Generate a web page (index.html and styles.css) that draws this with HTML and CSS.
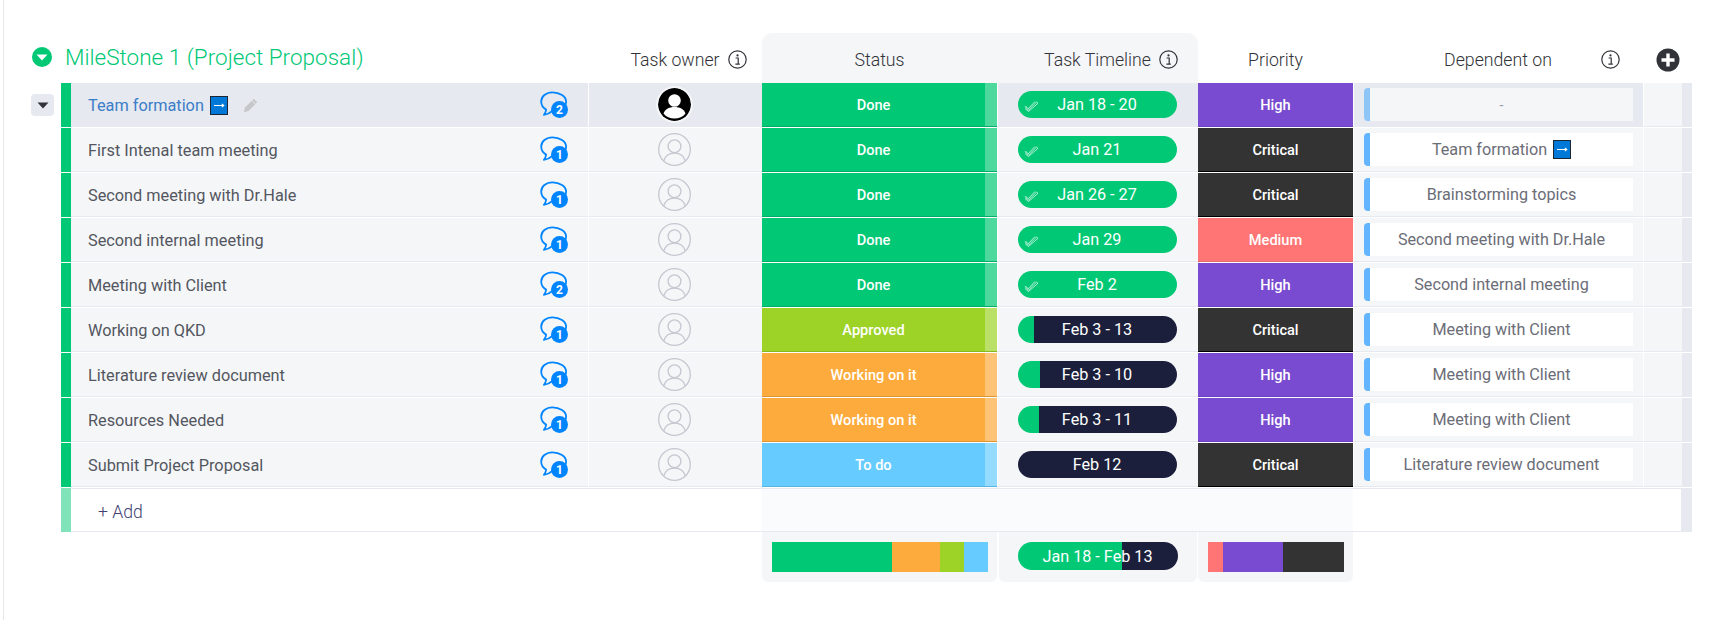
FILE: index.html
```html
<!DOCTYPE html>
<html lang="en">
<head>
<meta charset="utf-8">
<title>MileStone 1</title>
<link rel="stylesheet" href="styles.css">
</head>
<body>
<svg class="defs" width="0" height="0" aria-hidden="true">
  <symbol id="i-info" viewBox="0 0 19 19"><circle cx="9.5" cy="9.5" r="8.7" fill="none" stroke="#323338" stroke-width="1.2"/><circle cx="9.5" cy="5.4" r="1.1" fill="#323338"/><path d="M7.6 8h2.6v6M7.4 14.2h4.4" fill="none" stroke="#323338" stroke-width="1.2"/></symbol>
  <symbol id="i-bubble" viewBox="0 0 28 27"><path d="M12.5 1.3C6 1.3 1.2 5.4 1.2 10.6c0 3.4 1.9 6.3 4.9 8 0 1.9-.8 3.6-2.2 5.2 3.4-.4 6.2-1.6 8.2-3.6 6.6.4 14-3 14-9.6 0-5.2-6.400-9.300-13.600-9.300z" fill="none" stroke="#0085ff" stroke-width="1.800" stroke-linejoin="round"/></symbol>
  <symbol id="i-empty" viewBox="0 0 33 33"><g fill="none" stroke="#c5c7d0" stroke-width="1.300"><circle cx="16.500" cy="16.500" r="15.800"/><circle cx="16.500" cy="13.300" r="6.400"/><path d="M5.600 28c1.600-5 5.800-7.900 10.900-7.900S25.800 23 27.400 28"/></g></symbol>
  <symbol id="i-user" viewBox="0 0 33 33"><circle cx="16.500" cy="16.500" r="16.500" fill="#000"/><circle cx="16.500" cy="12.500" r="6.300" fill="#fff"/><path d="M5.500 25.500c1.500-4.500 6-6.500 11-6.500s9.500 2 11 6.500c-2.500 3.200-6.500 5-11 5s-8.500-1.800-11-5z" fill="#fff"/></symbol>
  <symbol id="i-arrow" viewBox="0 0 18 19"><rect x=".5" y=".5" width="17" height="18" fill="#0078d7" stroke="#1c2733"/><path d="M4 9.500h9.500M11.800 7.800l2 1.700-2 1.700" fill="none" stroke="#fff" stroke-width="1.100"/></symbol>
  <symbol id="i-check" viewBox="0 0 15 12"><path d="M1 6.500l3.500 3.800L12.500 2l1.500 1.300-9.500 8.200L1 8.500M1.500 6l2.700 2.800L11 1.500" fill="none" stroke="#fff" stroke-width=".8" opacity=".85"/></symbol>
</svg>
<main class="board">
  <header class="grid head">
    <div class="group">
      <svg class="group-icon" viewBox="0 0 20 20"><circle cx="10" cy="10" r="10" fill="#00c875"/><path d="M4.500 7.500h11L10 13.500z" fill="#fff"/></svg>
      <h1 class="group-title">MileStone 1 (Project Proposal)</h1>
    </div>
    <div class="hcell">
      <span class="htext">Task owner</span><svg class="info"><use href="#i-info"/></svg>
    </div>
    <div class="hcell hcell-tl">
      <span class="htext">Status</span>
    </div>
    <div class="hcell hcell-tr">
      <span class="htext">Task Timeline</span><svg class="info"><use href="#i-info"/></svg>
    </div>
    <div class="hcell">
      <span class="htext">Priority</span>
    </div>
    <div class="hcell">
      <span class="htext">Dependent on</span><svg class="info info-far"><use href="#i-info"/></svg>
    </div>
    <div class="hadd">
      <svg class="plus" viewBox="0 0 24 24"><circle cx="12" cy="12" r="11.500" fill="#323338"/><path d="M12 5.500v13M5.500 12h13" stroke="#fff" stroke-width="3.400"/></svg>
    </div>
  </header>

  <div class="grid row row-active">
    <div class="gutter"><button class="toggle" aria-label="Collapse"><svg viewBox="0 0 12 7" width="12" height="7"><path d="M.5.500h11L6 6.500z" fill="#323338"/></svg></button></div>
    <div class="bar"></div>
    <div class="name name-active"><span>Team formation</span><svg class="arrow"><use href="#i-arrow"/></svg><svg class="pencil" viewBox="0 0 15 15"><path d="M10.800.800l3.400 3.400-8.800 8.800-4.600 1.200 1.200-4.600z" fill="#c5c7c9"/><path d="M9 2.800l3.400 3.400" stroke="#e6e9ef" stroke-width="1"/></svg><span class="spring"></span><span class="bubble"><svg class="bubble-svg"><use href="#i-bubble"/></svg><b class="badge">2</b></span></div>
    <div class="owner"><svg class="avatar avatar-on"><use href="#i-user"/></svg></div>
    <div class="status done"><span class="label">Done</span><i class="fold"></i></div>
    <div class="time"><span class="pill done-pill"><svg class="check"><use href="#i-check"/></svg>Jan 18 - 20</span></div>
    <div class="prio high">High</div>
    <div class="dep"><span class="dep-box dep-empty"><span class="dep-dash">-</span></span></div>
    <div class="extra"></div><div class="end"></div>
  </div>

  <div class="grid row">
    <div class="gutter"></div><div class="bar"></div>
    <div class="name"><span>First Intenal team meeting</span><span class="spring"></span><span class="bubble"><svg class="bubble-svg"><use href="#i-bubble"/></svg><b class="badge">1</b></span></div>
    <div class="owner"><svg class="avatar"><use href="#i-empty"/></svg></div>
    <div class="status done"><span class="label">Done</span><i class="fold"></i></div>
    <div class="time"><span class="pill done-pill"><svg class="check"><use href="#i-check"/></svg>Jan 21</span></div>
    <div class="prio critical">Critical</div>
    <div class="dep"><span class="dep-box">Team formation<svg class="arrow arrow-dep"><use href="#i-arrow"/></svg></span></div>
    <div class="extra"></div><div class="end"></div>
  </div>

  <div class="grid row">
    <div class="gutter"></div><div class="bar"></div>
    <div class="name"><span>Second meeting with Dr.Hale</span><span class="spring"></span><span class="bubble"><svg class="bubble-svg"><use href="#i-bubble"/></svg><b class="badge">1</b></span></div>
    <div class="owner"><svg class="avatar"><use href="#i-empty"/></svg></div>
    <div class="status done"><span class="label">Done</span><i class="fold"></i></div>
    <div class="time"><span class="pill done-pill"><svg class="check"><use href="#i-check"/></svg>Jan 26 - 27</span></div>
    <div class="prio critical">Critical</div>
    <div class="dep"><span class="dep-box">Brainstorming topics</span></div>
    <div class="extra"></div><div class="end"></div>
  </div>

  <div class="grid row">
    <div class="gutter"></div><div class="bar"></div>
    <div class="name"><span>Second internal meeting</span><span class="spring"></span><span class="bubble"><svg class="bubble-svg"><use href="#i-bubble"/></svg><b class="badge">1</b></span></div>
    <div class="owner"><svg class="avatar"><use href="#i-empty"/></svg></div>
    <div class="status done"><span class="label">Done</span><i class="fold"></i></div>
    <div class="time"><span class="pill done-pill"><svg class="check"><use href="#i-check"/></svg>Jan 29</span></div>
    <div class="prio medium">Medium</div>
    <div class="dep"><span class="dep-box">Second meeting with Dr.Hale</span></div>
    <div class="extra"></div><div class="end"></div>
  </div>

  <div class="grid row">
    <div class="gutter"></div><div class="bar"></div>
    <div class="name"><span>Meeting with Client</span><span class="spring"></span><span class="bubble"><svg class="bubble-svg"><use href="#i-bubble"/></svg><b class="badge">2</b></span></div>
    <div class="owner"><svg class="avatar"><use href="#i-empty"/></svg></div>
    <div class="status done"><span class="label">Done</span><i class="fold"></i></div>
    <div class="time"><span class="pill done-pill"><svg class="check"><use href="#i-check"/></svg>Feb 2</span></div>
    <div class="prio high">High</div>
    <div class="dep"><span class="dep-box">Second internal meeting</span></div>
    <div class="extra"></div><div class="end"></div>
  </div>

  <div class="grid row">
    <div class="gutter"></div><div class="bar"></div>
    <div class="name"><span>Working on QKD</span><span class="spring"></span><span class="bubble"><svg class="bubble-svg"><use href="#i-bubble"/></svg><b class="badge">1</b></span></div>
    <div class="owner"><svg class="avatar"><use href="#i-empty"/></svg></div>
    <div class="status approved"><span class="label">Approved</span><i class="fold"></i></div>
    <div class="time"><span class="pill" style="--p:10%">Feb 3 - 13</span></div>
    <div class="prio critical">Critical</div>
    <div class="dep"><span class="dep-box">Meeting with Client</span></div>
    <div class="extra"></div><div class="end"></div>
  </div>

  <div class="grid row">
    <div class="gutter"></div><div class="bar"></div>
    <div class="name"><span>Literature review document</span><span class="spring"></span><span class="bubble"><svg class="bubble-svg"><use href="#i-bubble"/></svg><b class="badge">1</b></span></div>
    <div class="owner"><svg class="avatar"><use href="#i-empty"/></svg></div>
    <div class="status working"><span class="label">Working on it</span><i class="fold"></i></div>
    <div class="time"><span class="pill" style="--p:13.8%">Feb 3 - 10</span></div>
    <div class="prio high">High</div>
    <div class="dep"><span class="dep-box">Meeting with Client</span></div>
    <div class="extra"></div><div class="end"></div>
  </div>

  <div class="grid row">
    <div class="gutter"></div><div class="bar"></div>
    <div class="name"><span>Resources Needed</span><span class="spring"></span><span class="bubble"><svg class="bubble-svg"><use href="#i-bubble"/></svg><b class="badge">1</b></span></div>
    <div class="owner"><svg class="avatar"><use href="#i-empty"/></svg></div>
    <div class="status working"><span class="label">Working on it</span><i class="fold"></i></div>
    <div class="time"><span class="pill" style="--p:13.2%">Feb 3 - 11</span></div>
    <div class="prio high">High</div>
    <div class="dep"><span class="dep-box">Meeting with Client</span></div>
    <div class="extra"></div><div class="end"></div>
  </div>

  <div class="grid row">
    <div class="gutter"></div><div class="bar"></div>
    <div class="name"><span>Submit Project Proposal</span><span class="spring"></span><span class="bubble"><svg class="bubble-svg"><use href="#i-bubble"/></svg><b class="badge">1</b></span></div>
    <div class="owner"><svg class="avatar"><use href="#i-empty"/></svg></div>
    <div class="status todo"><span class="label">To do</span><i class="fold"></i></div>
    <div class="time"><span class="pill pill-plain">Feb 12</span></div>
    <div class="prio critical">Critical</div>
    <div class="dep"><span class="dep-box">Literature review document</span></div>
    <div class="extra"></div><div class="end"></div>
  </div>

  <div class="grid add-row">
    <div class="gutter"></div>
    <div class="add-bar"></div>
    <div class="add-label">+ Add</div>
    <div class="add-band"></div>
    <div class="add-tail"></div>
    <div class="end"></div>
  </div>

  <div class="grid foot">
    <div class="foot-lead"></div>
    <div class="fcell">
      <div class="stack"><i class="seg seg-done w50"></i><i class="seg seg-working w22"></i><i class="seg seg-approved w11a"></i><i class="seg seg-todo w11b"></i></div>
    </div>
    <div class="fcell fcell-time"><span class="pill pill-foot" style="--p:65%">Jan 18 - Feb 13</span></div>
    <div class="fcell">
      <div class="stack"><i class="seg seg-medium p11"></i><i class="seg seg-high p44"></i><i class="seg seg-critical p45"></i></div>
    </div>
  </div>
</main>
</body>
</html>
```
FILE: styles.css
```css
* { box-sizing: border-box; }
html, body { margin: 0; height: 100%; background: #fff; }
body { overflow: hidden; font-family: Roboto, "Liberation Sans", sans-serif; color: #4b4e5a; }
.defs { position: absolute; }

.board {
  margin-left: 3px;
  height: 620px;
  padding-top: 33px;
  border-left: 1px solid #e8e8e8;
}

.grid {
  display: grid;
  grid-template-columns: 57px 10px 517px 174px 235px 201px 155px 290px 39px 10px;
  width: 1688px;
}

/* header */
.head { height: 50px; }
.group { grid-column: 1 / 4; display: flex; align-items: center; padding: 0 0 2px 28px; }
.group-icon { width: 20px; height: 20px; flex: none; }
.group-title { margin: 0 0 0 13px; font-size: 22.500px; font-weight: 300; color: #00c875; white-space: nowrap; }
.hcell {
  display: grid;
  grid-template-columns: 1fr auto 1fr;
  align-items: center;
  column-gap: 8px;
  padding-top: 4px;
}
.htext { grid-column: 2; font-size: 17.700px; font-weight: 300; color: #323338; white-space: nowrap; }
.hcell-tl { background: #f5f6f8; border-top-left-radius: 10px; }
.hcell-tr { background: #f5f6f8; border-top-right-radius: 10px; }
.info { width: 19px; height: 19px; margin-top: -1px; }
.info-far { justify-self: end; margin-right: 23px; }
.hadd { display: flex; align-items: center; padding-left: 13px; padding-top: 4px; grid-column: 9 / 11; }
.plus { width: 24px; height: 24px; }

/* rows */
.row { height: 45px; padding-bottom: 1px; }
.row > * { border-bottom: 1px solid #e6e9ef; min-width: 0; }
.row > .gutter { border-bottom: 0; display: flex; align-items: center; padding-left: 27px; }
.toggle {
  display: flex; align-items: center; justify-content: center;
  width: 23px; height: 22px; padding: 0; border: 0; border-radius: 4px;
  background: #e6e9ef;
}
.bar { background: #00c875; border-bottom: 0 !important; }
.name {
  display: flex; align-items: center; padding: 2px 20px 0 17px;
  background: #f5f6f8; font-size: 16.300px; color: #53565f; white-space: nowrap;
}
.name-active { color: #3a7dc9; }
.spring { flex: 1; }
.arrow { width: 18px; height: 19px; margin-left: 6px; }
.arrow-dep { margin-left: 6px; }
.pencil { width: 15px; height: 15px; margin-left: 15px; }
.bubble { position: relative; display: block; width: 28px; height: 27px; margin-top: -2px; }
.bubble-svg { display: block; width: 28px; height: 27px; }
.badge {
  position: absolute; right: 0; bottom: 0;
  display: flex; align-items: center; justify-content: center;
  width: 17px; height: 17px; border-radius: 50%;
  background: #0085ff; color: #fff; font-size: 12px; font-weight: 700;
}
.owner { display: flex; align-items: center; justify-content: center; padding-right: 2px; background: #f5f6f8; border-left: 1px solid #fff; }
.avatar { width: 33px; height: 33px; }
.avatar-on { border-radius: 50%; box-shadow: 0 0 0 2px #f5f6f8; }

.status { display: flex; border-bottom-color: rgba(0,0,0,.12) !important; color: #fff; font-size: 14.600px; font-weight: 500; }
.label { flex: 1; display: flex; align-items: center; justify-content: center; }
.fold { width: 12px; background: rgba(255,255,255,.3); }
.done { background: #00c875; }
.approved { background: #9cd326; }
.working { background: #fdab3d; }
.todo { background: #66ccff; }

.time { display: flex; align-items: center; justify-content: center; background: #f5f6f8; border-left: 1px solid #fff; padding-bottom: 1px; }
.pill {
  --p: 0%;
  position: relative;
  display: flex; align-items: center; justify-content: center;
  width: 159px; height: 27px; margin-left: -2px; border-radius: 14px;
  color: #fff; font-size: 16.200px; white-space: nowrap;
  background: linear-gradient(90deg, #00c875 var(--p), #1c1f3b var(--p));
}
.done-pill { background: #00c875; }
.check { position: absolute; left: 6px; top: 9px; width: 15px; height: 12px; }
.pill-foot { width: 160px; height: 28px; }

.prio { display: flex; align-items: center; justify-content: center; color: #fff; font-size: 14.600px; font-weight: 500; }
.high { background: #784bd1; border-bottom-color: #6d40c4; }
.critical { background: #333; border-bottom-color: #000; }
.medium { background: #ff7575; border-bottom-color: #e86a6a; }

.dep { display: flex; align-items: center; padding: 0 10px; background: #f5f6f8; border-left: 1px solid #fff; }
.dep-box {
  flex: 1; display: flex; align-items: center; justify-content: center;
  height: 33px; background: #fff; border-left: 6px solid #64b5ff; border-radius: 4px 0 0 4px;
  font-size: 16.200px; color: #6b6d77; white-space: nowrap;
}
.dep-empty { background: #f5f6f8; border-left-color: #8ec5f7; }
.dep-dash { color: #9699a6; font-size: 14px; }
.extra { background: #f5f6f8; border-left: 1px solid #fff; }
.end { background: #e6e9ef; }

.row-active .name, .row-active .owner, .row-active .time, .row-active .dep { background: #e6e9ef; }

/* add row */
.add-row { height: 44px; }
.add-bar { background: #80e3ba; }
.add-label {
  display: flex; align-items: center; padding: 3px 0 0 26px;
  font-size: 17.600px; font-weight: 300; color: #3f4272;
  grid-column: 3 / 5;
  border-top: 1px solid #e6e9ef; border-bottom: 1px solid #e6e9ef; border-left: 1px solid #fff;
}
.add-band { grid-column: 5 / 8; background: #fafbfd; border-top: 1px solid #e6e9ef; border-bottom: 1px solid #e6e9ef; }
.add-tail { grid-column: 8 / 10; border-top: 1px solid #e6e9ef; border-bottom: 1px solid #e6e9ef; border-right: 1px solid #e6e9ef; }

/* footer */
.foot { height: 50px; }
.foot-lead { grid-column: 1 / 5; }
.fcell { padding: 10px 9px 10px 10px; background: #f5f6f8; border-radius: 0 0 6px 6px; }
.fcell-time { display: flex; justify-content: center; align-items: flex-start; margin: 0 1px 0 2px; }
.stack { display: flex; height: 30px; }
.seg { display: block; height: 100%; }
.seg-done { background: #00c875; }
.seg-working { background: #fdab3d; }
.seg-approved { background: #9cd326; }
.seg-todo { background: #66ccff; }
.seg-medium { background: #ff7575; }
.seg-high { background: #784bd1; }
.seg-critical { background: #333; }
.w50 { width: 120px; }
.w22 { width: 48px; }
.w11a { width: 24px; }
.w11b { width: 24px; }
.p11 { width: 15px; }
.p44 { width: 60px; }
.p45 { width: 61px; }
```
